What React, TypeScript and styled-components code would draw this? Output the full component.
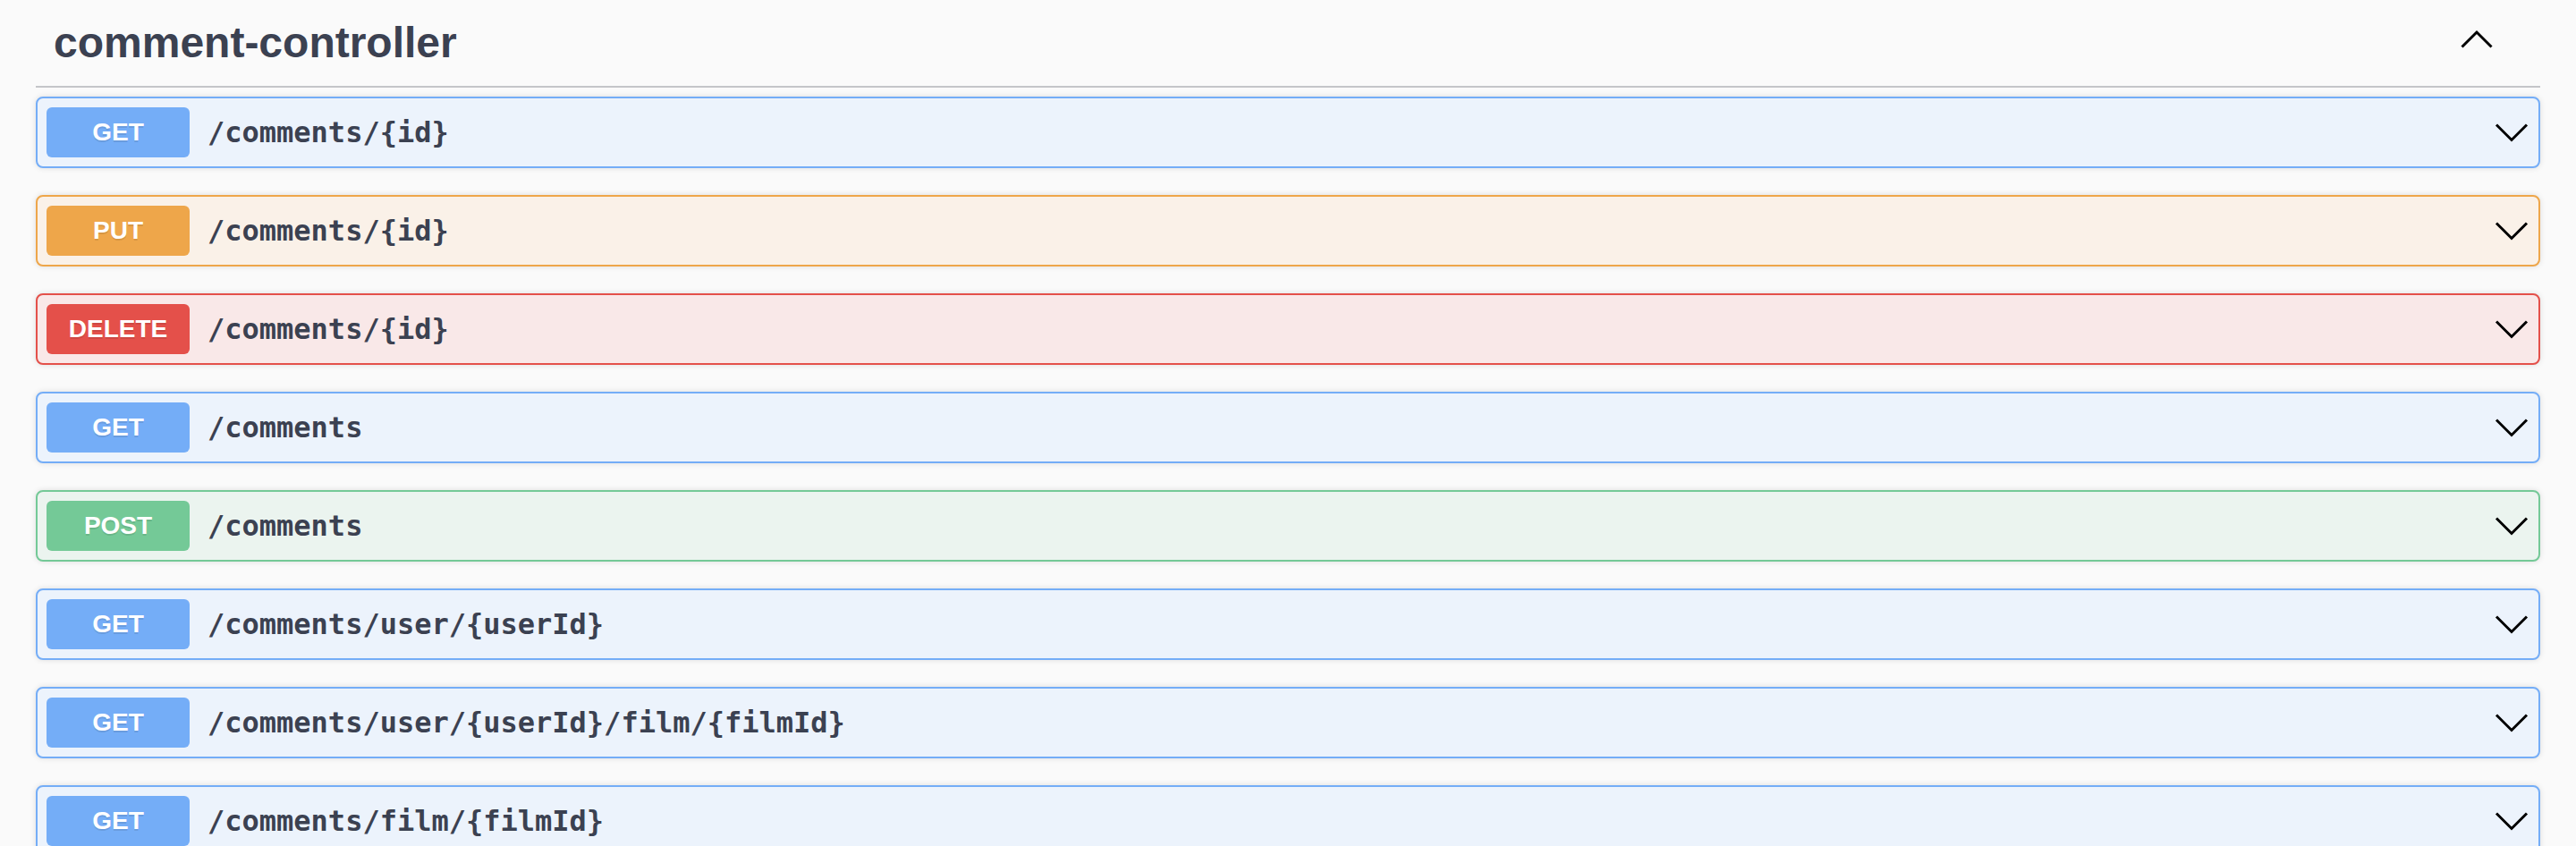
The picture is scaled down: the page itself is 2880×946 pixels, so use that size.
import React from 'react';
import styled, { createGlobalStyle } from 'styled-components';

const GlobalStyle = createGlobalStyle`
  html, body {
    margin: 0;
    padding: 0;
    background: #fafafa;
  }
  body {
    font-family: "Liberation Sans", Arial, sans-serif;
    color: #3b4151;
  }
`;

type Method = 'GET' | 'PUT' | 'DELETE' | 'POST';

const colors: Record<Method, { main: string; bg: string }> = {
  GET: { main: '#74adf7', bg: '#ecf3fc' },
  PUT: { main: '#eea64a', bg: '#faf1e8' },
  DELETE: { main: '#e4504a', bg: '#f9e8e8' },
  POST: { main: '#74c997', bg: '#ebf4ef' },
};

const Wrapper = styled.div`
  padding: 0 40px;
`;

const TagHeader = styled.div`
  display: flex;
  align-items: center;
  height: 96px;
  padding: 0 51px 0 20px;
  border-bottom: 2px solid #c4c5c9;
  margin-bottom: 10px;
`;

const TagTitle = styled.h3`
  flex: 1;
  margin: 0;
  font-size: 48px;
  line-height: 56px;
  font-weight: 700;
  color: #3b4151;
`;

const ArrowButton = styled.span`
  display: flex;
  width: 40px;
  height: 40px;
  margin-bottom: 9px;
`;

const Opblock = styled.div<{ $method: Method }>`
  display: flex;
  align-items: center;
  padding: 10px;
  margin-bottom: 30px;
  border: 2px solid ${(p) => colors[p.$method].main};
  border-radius: 8px;
  background: ${(p) => colors[p.$method].bg};
  box-shadow: 0 0 6px rgba(0, 0, 0, 0.12);
`;

const MethodBadge = styled.span<{ $method: Method }>`
  min-width: 160px;
  padding: 12px 0;
  border-radius: 6px;
  background: ${(p) => colors[p.$method].main};
  color: #fff;
  font-family: "Liberation Sans", Arial, sans-serif;
  font-size: 28px;
  line-height: 32px;
  font-weight: 700;
  text-align: center;
  text-shadow: 0 2px 0 rgba(0, 0, 0, 0.1);
`;

const Path = styled.span`
  flex: 1;
  padding: 0 20px;
  font-family: "DejaVu Sans Mono", "Liberation Mono", monospace;
  font-size: 32px;
  font-weight: 700;
  color: #3b4151;
`;

const ControlArrow = styled.span`
  display: flex;
  width: 40px;
  height: 40px;
`;

const Chevron = ({ up }: { up?: boolean }) => (
  <svg width="40" height="40" viewBox="0 0 40 40">
    <path
      d={up ? 'M3.5 28.5 L20 12 L36.5 28.5' : 'M3 11.5 L20 28.5 L37 11.5'}
      fill="none"
      stroke="#000"
      strokeWidth="3"
    />
  </svg>
);

const ops: { method: Method; path: string }[] = [
  { method: 'GET', path: '/comments/{id}' },
  { method: 'PUT', path: '/comments/{id}' },
  { method: 'DELETE', path: '/comments/{id}' },
  { method: 'GET', path: '/comments' },
  { method: 'POST', path: '/comments' },
  { method: 'GET', path: '/comments/user/{userId}' },
  { method: 'GET', path: '/comments/user/{userId}/film/{filmId}' },
  { method: 'GET', path: '/comments/film/{filmId}' },
];

const App: React.FC = () => {
  return (
    <>
      <GlobalStyle />
      <Wrapper>
        <TagHeader>
          <TagTitle>comment-controller</TagTitle>
          <ArrowButton>
            <Chevron up />
          </ArrowButton>
        </TagHeader>
        {ops.map((op, i) => (
          <Opblock key={i} $method={op.method}>
            <MethodBadge $method={op.method}>{op.method}</MethodBadge>
            <Path>{op.path}</Path>
            <ControlArrow>
              <Chevron />
            </ControlArrow>
          </Opblock>
        ))}
      </Wrapper>
    </>
  );
};

export default App;
